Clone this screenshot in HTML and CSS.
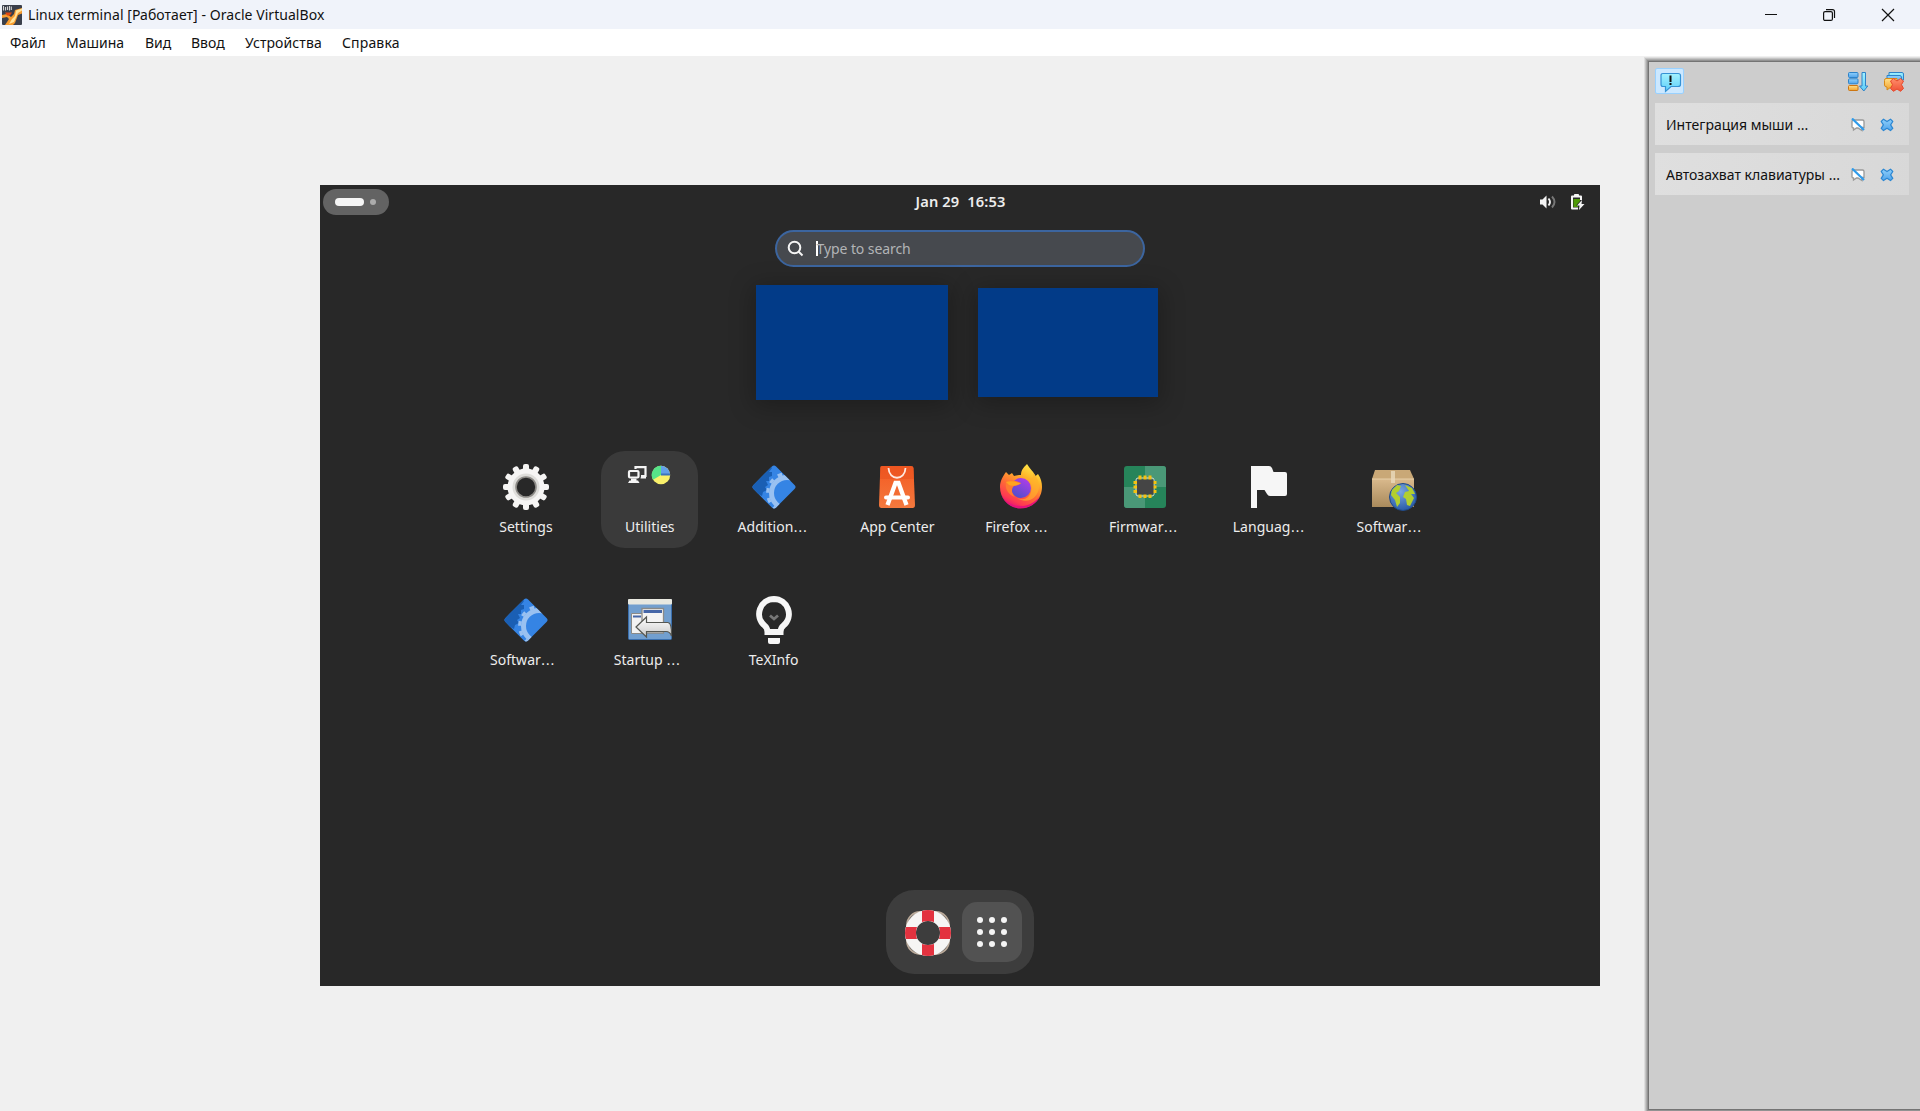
FILE: index.html
```html
<!DOCTYPE html>
<html lang="ru">
<head>
<meta charset="utf-8">
<title>Linux terminal [Работает] - Oracle VirtualBox</title>
<link rel="stylesheet" href="styles.css">
</head>
<body>
<svg class="defs" width="0" height="0">
  <defs>
    <linearGradient id="blue" x1="0" y1="0" x2="0" y2="1"><stop offset="0" stop-color="#8fd0fb"/><stop offset="1" stop-color="#4fa3ea"/></linearGradient>
    <linearGradient id="cyan" x1="0" y1="0" x2="0" y2="1"><stop offset="0" stop-color="#a4f2ff"/><stop offset="1" stop-color="#5ccdf8"/></linearGradient>
    <linearGradient id="amber" x1="0" y1="0" x2="0" y2="1"><stop offset="0" stop-color="#ffe08a"/><stop offset="1" stop-color="#f3a12c"/></linearGradient>
    <linearGradient id="red" x1="0" y1="0" x2="0" y2="1"><stop offset="0" stop-color="#ff8f6c"/><stop offset="1" stop-color="#ef5236"/></linearGradient>
    <linearGradient id="bag" x1="0" y1="0" x2="0" y2="1"><stop offset="0" stop-color="#f45a22"/><stop offset="1" stop-color="#f3793e"/></linearGradient>
    <linearGradient id="fox" x1=".8" y1="0" x2=".3" y2="1"><stop offset="0" stop-color="#fff14d"/><stop offset=".3" stop-color="#ffb62a"/><stop offset=".6" stop-color="#ff6a36"/><stop offset=".85" stop-color="#ff3a51"/><stop offset="1" stop-color="#e3107a"/></linearGradient>
    <linearGradient id="globe" x1=".8" y1="0" x2=".2" y2="1"><stop offset="0" stop-color="#b43bea"/><stop offset="1" stop-color="#4a51c8"/></linearGradient>
    <linearGradient id="box" x1="0" y1="0" x2="0" y2="1"><stop offset="0" stop-color="#d9b98c"/><stop offset="1" stop-color="#a98a5c"/></linearGradient>
    <radialGradient id="earth" cx=".4" cy=".3" r=".7"><stop offset="0" stop-color="#7aa6e0"/><stop offset="1" stop-color="#2a5ca8"/></radialGradient>
    <linearGradient id="arrow" x1="0" y1="0" x2="0" y2="1"><stop offset="0" stop-color="#fff"/><stop offset="1" stop-color="#c9c9c9"/></linearGradient>
    <clipPath id="diamond"><rect x="8" y="8" width="32" height="32" rx="3" transform="rotate(45 24 24)"/></clipPath>
    <symbol id="driver" viewBox="0 0 48 48">
      <g clip-path="url(#diamond)">
        <rect width="48" height="48" fill="#3584e4"/>
        <path d="M0 0H18L22 5 19 9 22 9 22 13 19 14 19 18 16 18 18 22 15 24 17 27 13 29 12 33 8 31 0 40Z" fill="#1a5fb4"/>
        <circle cx="37" cy="30" r="15.5" fill="none" stroke="#99c1f1" stroke-width="5"/>
        <circle cx="37" cy="30" r="19.3" fill="none" stroke="#99c1f1" stroke-width="3.2" stroke-dasharray="4.6 5.5"/>
      </g>
    </symbol>
    <symbol id="mute" viewBox="0 0 14 14">
      <path d="M3 2H11.500Q13 2 13 3.500V9.500H11V12.500L7 10H5.500L2.500 12V10Q1 10 1 8.500V3.500Q1 2 3 2Z" fill="#fff" stroke="#999" stroke-width="1.300"/>
      <path d="M1 .5 13 12" stroke="#2f9bea" stroke-width="2.200"/>
    </symbol>
    <symbol id="close" viewBox="0 0 14 14">
      <path d="M3.500 1.200 7 3.600 10.500 1.200 12.800 3.500 10.600 6.900 12.800 10.300 10.500 12.600 7 10.300 3.500 12.600 1.200 10.300 3.400 6.900 1.200 3.500Z" fill="url(#blue)" stroke="#2b87d3" stroke-width="1.200" stroke-linejoin="round"/>
    </symbol>
  </defs>
</svg>

<header class="titlebar">
  <svg class="app-icon" width="20" height="20" viewBox="0 0 20 20">
    <rect width="20" height="20" rx="1" fill="#3a3f4b"/>
    <path d="M0 10 5 9 9 12 12 9 13 5 20 3V8.500L16 10 13 18 11 20H3L7 14 5 12 0 13Z" fill="#f79b2e"/>
    <path d="M14 5.500 20 3.500V5.500L16 8 12 17 7 19 10 14 13 11Z" fill="#ffe39b"/>
    <path d="M3 7.500H10L8 10.500H5Z" fill="#e2460f"/>
    <path d="M1.500 1V5.500M3.500 2V5.500M5.500 1.500V5M7.500 1V5.500M9.300 1.500V5" stroke="#d5d5d5" stroke-width="1.100"/>
  </svg>
  <span class="title">Linux terminal [Работает] - Oracle VirtualBox</span>
  <div class="controls">
    <svg width="14" height="14" viewBox="0 0 14 14"><path d="M2 6.500H14" stroke="#111"/></svg>
    <svg width="14" height="14" viewBox="0 0 14 14" fill="none" stroke="#111" stroke-width="1.200"><rect x="1.600" y="3.600" width="8.800" height="8.800" rx="1.500"/><path d="M4 1.600H10.500Q12.500 1.600 12.500 3.600V10"/></svg>
    <svg width="14" height="14" viewBox="0 0 14 14"><path d="M1 1 13 13M13 1 1 13" stroke="#111" stroke-width="1.200"/></svg>
  </div>
</header>
<nav class="menubar">
  <span class="m1">Файл</span><span class="m2">Машина</span><span class="m3">Вид</span><span class="m4">Ввод</span><span class="m5">Устройства</span><span class="m6">Справка</span>
</nav>

<div class="workspace">
  <main class="guest">
    <div class="topbar">
      <div class="pill"><i></i><b></b></div>
      <div class="clock">Jan 29&nbsp; 16:53</div>
      <div class="status">
        <svg width="18" height="16" viewBox="0 0 18 16"><path d="M1 5.500H3.500L7.500 1.500V14.500L3.500 10.500H1Z" fill="#f5f5f5"/><path d="M9.500 4.500Q12.500 8 9.500 11.500" fill="none" stroke="#f5f5f5" stroke-width="1.900"/><path d="M13 2.500Q18 8 13 13.500" fill="none" stroke="#777" stroke-width="1.900"/></svg>
        <svg width="16" height="18" viewBox="0 0 16 18"><path d="M4.500 3V1.500H8.500V3" fill="#f5f5f5" stroke="#f5f5f5"/><path d="M11 7V3.500H2V15.500H8" fill="none" stroke="#f5f5f5" stroke-width="2" stroke-linejoin="round"/><path d="M3.500 6H10V8L6 12.500H8V14H3.500Z" fill="#4e9a06"/><path d="M12 7 7 12.500H9.500L9 17 14.500 11H11.500Z" fill="#f5f5f5"/></svg>
      </div>
    </div>

    <div class="search">
      <svg width="17" height="17" viewBox="0 0 17 17" fill="none" stroke="#f5f5f5" stroke-width="2"><circle cx="7.500" cy="7.500" r="5.800"/><path d="M11.500 11.500 15.500 15.500"/></svg>
      <i class="caret"></i><span>Type to search</span>
    </div>

    <div class="previews"><div class="ws ws-active"></div><div class="ws"></div></div>

    <div class="apps">
      <div class="app">
        <svg class="ico" viewBox="0 0 48 48"><g fill="#f6f5f4"><rect x="21" y="1" width="6" height="46" rx="2"/><rect x="21" y="1" width="6" height="46" rx="2" transform="rotate(30 24 24)"/><rect x="21" y="1" width="6" height="46" rx="2" transform="rotate(60 24 24)"/><rect x="21" y="1" width="6" height="46" rx="2" transform="rotate(90 24 24)"/><rect x="21" y="1" width="6" height="46" rx="2" transform="rotate(120 24 24)"/><rect x="21" y="1" width="6" height="46" rx="2" transform="rotate(150 24 24)"/><circle cx="24" cy="24" r="18.500"/></g><circle cx="24" cy="24" r="13.500" fill="#deddda"/><circle cx="24" cy="24" r="10" fill="#282828" stroke="#8d8b87" stroke-width="1.600"/></svg>
        <span>Settings</span>
      </div>
      <div class="app folder">
        <div class="minis">
          <svg width="20" height="20" viewBox="0 0 20 20" fill="none" stroke="#f5f5f5" stroke-width="2.200"><path d="M8.500 4V2.200H18.500V11H14"/><path d="M13.500 13.500H19V11.500H14Z" fill="#f5f5f5" stroke="none"/><rect x="2" y="6" width="9.500" height="6.500" rx="1"/><path d="M1 18H12.500L11 15.500H2.500Z" fill="#f5f5f5" stroke="none"/><rect x="4" y="13.500" width="5.500" height="2.500" fill="#f5f5f5" stroke="none"/></svg>
          <svg width="20" height="20" viewBox="0 0 20 20"><circle cx="10" cy="10" r="9.200" fill="#f9f06b"/><path d="M10 10V.8A9.200 9.200 0 0 1 19.200 10Z" fill="#62a0ea"/><path d="M10 8.500H19V10.500H10Z" fill="#3b72bd"/><path d="M10 10V.8A9.200 9.200 0 0 0 2 14.700Z" fill="#57e389"/></svg>
        </div>
        <span>Utilities</span>
      </div>
      <div class="app clipped"><svg class="ico"><use href="#driver"/></svg><span>Addition<b>…</b></span></div>
      <div class="app">
        <svg class="ico" viewBox="0 0 48 48"><path d="M9 3H38Q40.300 3 40.500 5L42 42Q42 45 39.500 45H8.500Q6 45 6 42L7.300 5Q7.500 3 9 3Z" fill="url(#bag)"/><path d="M7.300 4Q7.500 3 9 3H38Q40.300 3 40.500 5L41 16H7Z" fill="#e95420" opacity=".6"/><path d="M15.500 5C16 18 32 18 32.500 5" fill="none" stroke="#ffe9df" stroke-width="1.800"/><g fill="none" stroke="#fff"><path d="M14.500 42 22.500 20H25.500L33.500 42" stroke-width="4.300"/><path d="M13 34.500H35" stroke-width="4" stroke-linecap="round"/></g></svg>
        <span>App Center</span>
      </div>
      <div class="app clipped">
        <svg class="ico" viewBox="0 0 48 48"><path d="M30 1C33 6 37 9 38.500 13L41 11C44 15 45 20 45 24C45 36 35.500 45 24 45C12 45 3 36 3 24C3 18 6 13 9 9L12 12 15 10 17 13C20 12 23 12 24 12C24 7 27 4 30 1Z" fill="url(#fox)"/><path d="M4 31C9 44 31 49 43 33C37 48 12 52 4 31Z" fill="#e6127b"/><circle cx="24" cy="25" r="10" fill="url(#globe)"/><path d="M9 19C14 16 20 18 24 20C22 23 17 22 16 24C14 27 15 31 18 34C10 31 8 25 9 19Z" fill="#ff7b31"/><path d="M9 19Q15 17 24 20.500Q17 24 12 22Z" fill="#ffa420"/><path d="M29 15C33 17 36 22 34 29C32 35 27 38 20 35C30 42 42 35 42 23C42 17 39 13 36 10C37 15 35 16 29 15Z" fill="#ffb22b" opacity=".65"/></svg>
        <span>Firefox <b>…</b></span>
      </div>
      <div class="app clipped">
        <svg class="ico" viewBox="0 0 48 48"><rect x="3" y="3" width="42" height="42" rx="3" fill="#26845a"/><path d="M24 3H42Q45 3 45 6V24H24ZM3 24H24V45H6Q3 45 3 42Z" fill="#4a9877"/><rect x="15" y="15" width="18" height="18" rx="2" fill="none" stroke="#d8d8d8"/><path d="M19 12.500V35M24 12.500V35M29 12.500V35M12.500 19.500H35.500M12.500 24H35.500M12.500 28.500H35.500" stroke="#f5c211" stroke-width="3"/><rect x="16" y="16.500" width="16.500" height="15" fill="#454545"/></svg>
        <span>Firmwar<b>…</b></span>
      </div>
      <div class="app clipped">
        <svg class="ico" viewBox="0 0 48 48"><path d="M6 3H24Q26 3 27 5L28.500 9H40Q42 9 42 11V31Q42 33 40 33H25Q23 33 22 31L19.500 27H12V45H6Z" fill="#f6f6f6"/></svg>
        <span>Languag<b>…</b></span>
      </div>
      <div class="app clipped">
        <svg class="ico" viewBox="0 0 48 48"><path d="M3 16H45V44H3Z" fill="url(#box)"/><path d="M6 7H41L45 16H3Z" fill="#c9a877"/><path d="M3 16H45" stroke="#e6cfa9"/><path d="M22 8H26V20H22Z" fill="#ead9bc" opacity=".8"/><circle cx="34" cy="34" r="13.500" fill="url(#earth)" stroke="#204a87"/><path d="M23 27 28 22 32 23 30 28 27 30 31 34 31 40 28 44 26 37 22 32ZM36 22 43 25 46 31 42 31 45 35 41 43 38 42 37 36 34 34 36 29 40 28Z" fill="#b2cf2e"/></svg>
        <span>Softwar<b>…</b></span>
      </div>
      <div class="app clipped"><svg class="ico"><use href="#driver"/></svg><span>Softwar<b>…</b></span></div>
      <div class="app clipped">
        <svg class="ico" viewBox="0 0 48 48"><rect x="2.500" y="3.500" width="43" height="40" rx="1" fill="#729fcf" stroke="#3a6fae"/><rect x="2" y="3" width="44" height="5.500" rx="1" fill="#e8e8e0"/><path d="M5.500 17.500H17V37.500H5.500Z" fill="#f2f2f2" stroke="#8a8a88"/><path d="M7 19.500H15V21.500H7Z" fill="#4667a8"/><path d="M16 12.500H37.500V37H16Z" fill="#f4f4f4" stroke="#8a8a88" stroke-width="1.300"/><path d="M17.500 14H36V17H17.500Z" fill="#4667a8"/><path d="M10 31 20.500 21V26.500H42Q46 27 45.500 40Q44 35.500 40 35.500H20.500V41Z" fill="url(#arrow)" stroke="#555753" stroke-width="1.200"/></svg>
        <span>Startup <b>…</b></span>
      </div>
      <div class="app">
        <svg class="ico" viewBox="0 0 48 48"><path d="M24 3A15 15 0 0 1 33.500 29.500Q30.500 32 30.500 36H17.500Q17.500 32 14.500 29.500A15 15 0 0 1 24 3Z" fill="none" stroke="#f6f6f6" stroke-width="6"/><path d="M15 33H33V37.500L30 39H18L15 37.500Z" fill="#f6f6f6"/><path d="M18 42H30V46Q30 48 28 48H20Q18 48 18 46Z" fill="#f6f6f6"/><path d="M20 19.500 24 23 28 19.500" fill="none" stroke="#777" stroke-width="2.800"/></svg>
        <span>TeXInfo</span>
      </div>
    </div>

    <div class="dock">
      <svg class="help" width="48" height="48" viewBox="0 0 48 48"><rect x="3" y="3" width="42" height="42" rx="13" fill="none" stroke="#b9a999" stroke-width="1.800"/><circle cx="24" cy="24" r="17.500" fill="none" stroke="#f6f5f4" stroke-width="11"/><path d="M18 2Q24 0 30 2V13Q24 11 18 13ZM18 46Q24 48 30 46V35Q24 37 18 35ZM2 18Q0 24 2 30H13Q11 24 13 18ZM46 18Q48 24 46 30H35Q37 24 35 18Z" fill="#e3323f"/></svg>
      <div class="grid-btn"><i></i><i></i><i></i><i></i><i></i><i></i><i></i><i></i><i></i></div>
    </div>
  </main>

  <aside class="center">
    <div class="tools">
      <div class="toggle"><svg width="26" height="24" viewBox="0 0 26 24"><path d="M6 4.500H21Q23.500 4.500 23.500 6.500V15.500Q23.500 17.500 21 17.500H14L8.500 22.500V17.500H6Q4 17.500 4 15.500V6.500Q4 4.500 6 4.500Z" fill="url(#cyan)" stroke="#3592d4" stroke-width="1.200"/><path d="M13.500 6.500V13M13.500 14V16" stroke="#111" stroke-width="2"/></svg></div>
      <svg class="sort" width="22" height="22" viewBox="0 0 22 22"><rect x="1.500" y="1.500" width="9.500" height="5" rx="1" fill="url(#blue)" stroke="#2d83c9"/><rect x="1.500" y="7.800" width="9.500" height="5" rx="1" fill="url(#blue)" stroke="#2d83c9"/><rect x="1.500" y="14.500" width="9.500" height="5" rx="1" fill="url(#amber)" stroke="#cc7612"/><path d="M15 1.500H18.500V15H20.800L16.800 20 12.500 15H15Z" fill="url(#cyan)" stroke="#2d83c9"/></svg>
      <svg width="22" height="22" viewBox="0 0 22 22"><path d="M6 1.500H19Q21 1.500 20.500 4V9H6Z" fill="url(#cyan)" stroke="#2d83c9"/><path d="M4 4.500H17Q18.500 4.500 18.500 7V12H4Z" fill="url(#blue)" stroke="#2d83c9"/><path d="M3 7.500H14V16H8L4 19V16Q1.500 16 1.500 14V9.500Q1.500 7.500 3 7.500Z" fill="url(#amber)" stroke="#d88a17"/><path d="M10.500 7.500 14 10 17.500 7.500 20.500 10 18.500 13.700 20.500 17.500 17.500 20.300 14 18 10.500 20.300 7.500 17.500 9.500 13.700 7.500 10Z" fill="url(#red)" stroke="#e8482b" stroke-linejoin="round"/></svg>
    </div>
    <div class="note"><span>Интеграция мыши ...</span><svg width="14" height="14"><use href="#mute"/></svg><svg width="14" height="14"><use href="#close"/></svg></div>
    <div class="note"><span>Автозахват клавиатуры ...</span><svg width="14" height="14"><use href="#mute"/></svg><svg width="14" height="14"><use href="#close"/></svg></div>
  </aside>
</div>
</body>
</html>
```

FILE: styles.css
```css
* { box-sizing: border-box; }
html, body { height: 100%; }
body {
  margin: 0;
  display: flex;
  flex-direction: column;
  overflow: hidden;
  background: #f0f0f0;
  color: #111;
  font-family: "Noto Sans", "Open Sans", sans-serif;
  font-size: 14px;
  white-space: nowrap;
}
svg { display: block; flex: none; }
.defs { position: absolute; }

.titlebar {
  height: 29px;
  flex: none;
  display: flex;
  align-items: center;
  padding: 0 25px 0 2px;
  background: #f0f3fa;
}
.title { margin-left: 6px; letter-spacing: 0.05px; }
.controls { display: flex; gap: 45px; margin-left: auto; }

.menubar {
  height: 27px;
  flex: none;
  display: flex;
  align-items: center;
  background: #fff;
  padding-left: 10px;
  position: relative;
  z-index: 1;
}
.m1 { width: 56px; letter-spacing: -0.1px; }
.m2 { width: 79px; }
.m3 { width: 46px; }
.m4 { width: 54px; }
.m5 { width: 97px; letter-spacing: 0.1px; }
.m6 { letter-spacing: 0.15px; }

.workspace { flex: 1; display: flex; min-height: 0; }

.guest {
  width: 1280px;
  height: 801px;
  flex: none;
  margin: 129px 48px 0 320px;
  display: flex;
  flex-direction: column;
  align-items: center;
  background: #282828;
  color: #ededed;
}
.topbar {
  width: 100%;
  height: 33px;
  flex: none;
  display: grid;
  grid-template-columns: 1fr auto 1fr;
  align-items: center;
  padding: 0 14px 0 3px;
}
.pill {
  width: 66px;
  height: 26px;
  border-radius: 13px;
  background: #636363;
  display: flex;
  align-items: center;
  gap: 6px;
  padding-left: 12px;
}
.pill i { width: 29px; height: 8px; border-radius: 4px; background: #f5f5f5; }
.pill b { width: 6px; height: 6px; border-radius: 50%; background: #acacac; }
.clock { font-size: 14.67px; font-weight: 600; letter-spacing: 0.12px; padding: 0 0 2px 12px; line-height: 20px; }
.status { display: flex; align-items: center; justify-content: flex-end; gap: 13px; }

.search {
  width: 370px;
  height: 37px;
  flex: none;
  margin-top: 12px;
  border: 2px solid #3c659f;
  border-radius: 19px;
  background: #46494e;
  display: flex;
  align-items: center;
  padding-left: 10px;
  color: #b2b4b6;
  letter-spacing: -0.08px;
}
.caret { width: 2px; height: 15px; margin: 0 -1.500px 0 12px; background: #fff; }

.previews {
  display: flex;
  align-items: center;
  gap: 30px;
  margin: 18px 7px 0 0;
}
.ws { width: 180px; height: 109px; background: #023b88; box-shadow: 0 4px 22px 3px rgba(0, 0, 0, .25); }
.ws-active { width: 192px; height: 115px; }

.apps {
  display: grid;
  grid-template-columns: repeat(8, 97px);
  column-gap: 26.8px;
  row-gap: 36px;
  margin: 51px 1.5px 0 0;
}
.app {
  height: 97px;
  display: flex;
  flex-direction: column;
  align-items: center;
  padding-top: 12px;
}
.ico { width: 48px; height: 48px; }
.app span { margin-top: 6px; line-height: 20px; letter-spacing: 0.03px; }
.clipped span { width: 72px; }
.clipped b { font-family: "DejaVu Sans", sans-serif; font-weight: 400; line-height: 1; }
.folder { border-radius: 24px; background: #3a3a3a; }
.minis { height: 48px; display: flex; gap: 4px; padding: 1.5px 2px 0 0; }

.dock {
  width: 148px;
  height: 84px;
  flex: none;
  margin-top: auto;
  margin-bottom: 12px;
  border-radius: 28px;
  background: #3d3d3d;
  display: flex;
  align-items: center;
  padding: 0 12px 0 18px;
  justify-content: space-between;
}
.help { margin-top: 2px; }
.grid-btn {
  width: 60px;
  height: 60px;
  border-radius: 15px;
  background: #525252;
  display: grid;
  grid-template-columns: repeat(3, 6px);
  gap: 6px;
  place-content: center;
}
.grid-btn i { width: 6px; height: 6px; border-radius: 50%; background: #f5f5f5; }

.center {
  flex: 1;
  min-width: 0;
  margin: 5px 0 1px;
  border: 1px solid #747474;
  border-right: 0;
  box-shadow: 0 0 0 1px #929292, 0 0 0 2px #acacac, 0 0 0 3px #c5c5c5, 0 0 0 4px #dedede;
  background: #cdcdcd;
  padding: 6px 11px 0 6px;
}
.tools { height: 26px; display: flex; align-items: center; gap: 14px; margin-bottom: 9px; }
.toggle { width: 29px; height: 26px; border: 1px solid #99d1ff; border-radius: 2px; background: #cce8ff; display: grid; place-items: center; }
.sort { margin-left: auto; }
.tools > svg { margin-top: 2px; }
.tools > svg:last-child { margin-right: 4px; }
.note {
  height: 42px;
  margin-bottom: 8px;
  display: flex;
  align-items: center;
  padding: 0 15px 0 11px;
  gap: 15px;
  background: linear-gradient(100deg, #dfdfdf, #d8d8d8);
}
.note span { width: 170px; }
.note svg { margin-top: 1px; }
```
